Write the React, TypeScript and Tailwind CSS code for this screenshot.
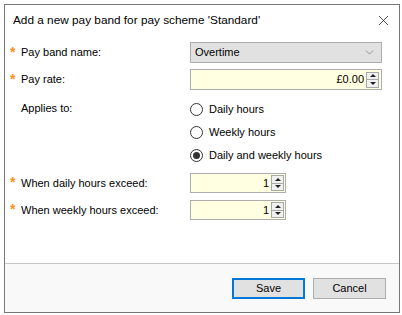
import { ChevronDown, X } from 'lucide-react'

const font = { fontFamily: '"Liberation Sans", Arial, sans-serif' }

function Star() {
  return <span className="w-[11px] text-[#f7941d] text-[14px] leading-none font-bold -mt-[2px]">*</span>
}

function Spinner() {
  return (
    <div className="flex flex-col w-[13px] h-[16px] border border-[#a8a8a8] bg-[#f0f0f0]">
      <div className="flex-1 flex items-center justify-center border-b border-[#a8a8a8]">
        <div className="w-0 h-0 border-l-[3px] border-r-[3px] border-b-[3px] border-l-transparent border-r-transparent border-b-[#222]" />
      </div>
      <div className="flex-1 flex items-center justify-center">
        <div className="w-0 h-0 border-l-[3px] border-r-[3px] border-t-[3px] border-l-transparent border-r-transparent border-t-[#222]" />
      </div>
    </div>
  )
}

function Radio({ label, checked }: { label: string; checked?: boolean }) {
  return (
    <div className="flex items-center h-[23px] gap-[6px]">
      <div className="w-[13px] h-[13px] rounded-full border border-[#333] bg-white flex items-center justify-center">
        {checked && <div className="w-[7px] h-[7px] rounded-full bg-[#333]" />}
      </div>
      <span>{label}</span>
    </div>
  )
}

export default function App() {
  return (
    <div className="w-[402px] h-[315px] bg-white pl-[4px] pt-[4px] text-[11px] text-black" style={font}>
      <div className="w-[396px] h-[309px] border border-[#777] flex flex-col bg-white">
        <div className="h-[31px] flex items-center justify-between pl-[8px] pr-[7px]">
          <span className="text-[11.8px]">Add a new pay band for pay scheme 'Standard'</span>
          <X size={17} strokeWidth={1.1} className="text-[#222]" />
        </div>

        <div className="flex-1 flex flex-col pt-[6px]">
          <div className="flex items-center h-[21px]">
            <div className="w-[185px] flex items-center pl-[5px]">
              <Star />
              <span>Pay band name:</span>
            </div>
            <div className="w-[192px] h-[21px] bg-[#e1e1e1] border border-[#adadad] flex items-center justify-between pl-[4px] pr-[5px]">
              <span>Overtime</span>
              <ChevronDown size={13} strokeWidth={1} className="text-[#555]" />
            </div>
          </div>

          <div className="flex items-center h-[21px] mt-[6px]">
            <div className="w-[185px] flex items-center pl-[5px]">
              <Star />
              <span>Pay rate:</span>
            </div>
            <div className="w-[192px] h-[21px] bg-[#ffffe1] border border-[#adadad] flex items-center justify-end pr-[2px] gap-[2px]">
              <span>£0.00</span>
              <Spinner />
            </div>
          </div>

          <div className="flex mt-[8px]">
            <div className="w-[185px] pl-[16px] h-[21px] flex items-center">Applies to:</div>
            <div className="flex flex-col">
              <Radio label="Daily hours" />
              <Radio label="Weekly hours" />
              <Radio label="Daily and weekly hours" checked />
            </div>
          </div>

          <div className="flex items-center h-[20px] mt-[6px]">
            <div className="w-[185px] flex items-center pl-[5px]">
              <Star />
              <span>When daily hours exceed:</span>
            </div>
            <div className="w-[96px] h-[20px] bg-[#ffffe1] border border-[#adadad] flex items-center justify-end pr-[1px] gap-[2px]">
              <span>1</span>
              <Spinner />
            </div>
          </div>

          <div className="flex items-center h-[20px] mt-[7px]">
            <div className="w-[185px] flex items-center pl-[5px]">
              <Star />
              <span>When weekly hours exceed:</span>
            </div>
            <div className="w-[96px] h-[20px] bg-[#ffffe1] border border-[#adadad] flex items-center justify-end pr-[1px] gap-[2px]">
              <span>1</span>
              <Spinner />
            </div>
          </div>
        </div>

        <div className="h-[49px] border-t border-[#c8c8c8] bg-[#f9f9f9] flex items-center justify-end gap-[8px] pr-[13px]">
          <button className="w-[73px] h-[21px] bg-[#e1e1e1] border-2 border-[#0078d7] flex items-center justify-center">
            Save
          </button>
          <button className="w-[73px] h-[21px] bg-[#e1e1e1] border border-[#adadad] flex items-center justify-center">
            Cancel
          </button>
        </div>
      </div>
    </div>
  )
}
